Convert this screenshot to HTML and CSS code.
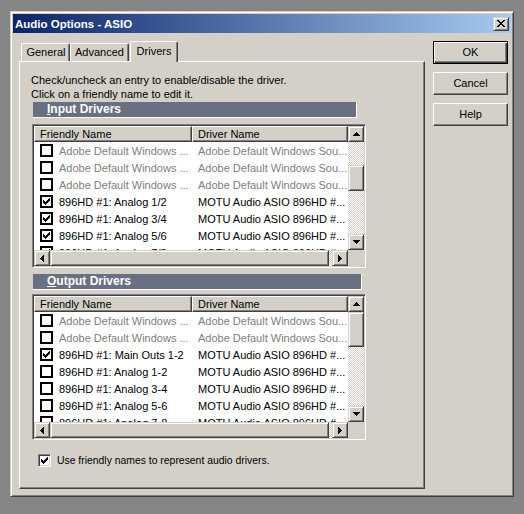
FILE: index.html
```html
<!DOCTYPE html>
<html>
<head>
<meta charset="utf-8">
<link rel="stylesheet" href="styles.css">
</head>
<body>
<div class="dialog">
  <div class="titlebar">
    <span class="title">Audio Options - ASIO</span>
    <div class="close raised">
      <svg width="8" height="7" viewBox="0 0 8 7" shape-rendering="crispEdges"><path d="M0 0h2v1h-2zM6 0h2v1h-2zM1 1h2v1h-2zM5 1h2v1h-2zM2 2h4v1h-4zM3 3h2v1h-2zM2 4h4v1h-4zM1 5h2v1h-2zM5 5h2v1h-2zM0 6h2v1h-2zM6 6h2v1h-2z"/></svg>
    </div>
  </div>
  <div class="main">
    <div class="leftcol">
      <div class="tabs">
        <div class="tab t-general">General</div>
        <div class="tab t-adv">Advanced</div>
        <div class="tab t-drv">Drivers</div>
      </div>
      <div class="panel">
        <p class="help">Check/uncheck an entry to enable/disable the driver.<br>Click on a friendly name to edit it.</p>

        <div class="groupbar gb-in"><u>I</u>nput Drivers</div>
        <div class="listbox lb-in">
          <div class="lv">
            <div class="lvhead"><div class="hc c1">Friendly Name</div><div class="hc c2">Driver Name</div></div>
            <div class="row dis"><div class="c1"><span class="cb"></span>Adobe Default Windows ...</div><div class="c2">Adobe Default Windows Sou...</div></div>
            <div class="row dis"><div class="c1"><span class="cb"></span>Adobe Default Windows ...</div><div class="c2">Adobe Default Windows Sou...</div></div>
            <div class="row dis"><div class="c1"><span class="cb"></span>Adobe Default Windows ...</div><div class="c2">Adobe Default Windows Sou...</div></div>
            <div class="row"><div class="c1"><span class="cb"><svg class="chk" width="7" height="7" viewBox="0 0 7 7" shape-rendering="crispEdges"><path d="M6 0h1v1h-1zM5 1h2v1h-2zM0 2h1v1h-1zM4 2h3v1h-3zM0 3h2v1h-2zM3 3h3v1h-3zM0 4h5v1h-5zM1 5h3v1h-3zM2 6h1v1h-1z"/></svg></span>896HD #1: Analog 1/2</div><div class="c2">MOTU Audio ASIO 896HD #...</div></div>
            <div class="row"><div class="c1"><span class="cb"><svg class="chk" width="7" height="7" viewBox="0 0 7 7" shape-rendering="crispEdges"><path d="M6 0h1v1h-1zM5 1h2v1h-2zM0 2h1v1h-1zM4 2h3v1h-3zM0 3h2v1h-2zM3 3h3v1h-3zM0 4h5v1h-5zM1 5h3v1h-3zM2 6h1v1h-1z"/></svg></span>896HD #1: Analog 3/4</div><div class="c2">MOTU Audio ASIO 896HD #...</div></div>
            <div class="row"><div class="c1"><span class="cb"><svg class="chk" width="7" height="7" viewBox="0 0 7 7" shape-rendering="crispEdges"><path d="M6 0h1v1h-1zM5 1h2v1h-2zM0 2h1v1h-1zM4 2h3v1h-3zM0 3h2v1h-2zM3 3h3v1h-3zM0 4h5v1h-5zM1 5h3v1h-3zM2 6h1v1h-1z"/></svg></span>896HD #1: Analog 5/6</div><div class="c2">MOTU Audio ASIO 896HD #...</div></div>
            <div class="row"><div class="c1"><span class="cb"><svg class="chk" width="7" height="7" viewBox="0 0 7 7" shape-rendering="crispEdges"><path d="M6 0h1v1h-1zM5 1h2v1h-2zM0 2h1v1h-1zM4 2h3v1h-3zM0 3h2v1h-2zM3 3h3v1h-3zM0 4h5v1h-5zM1 5h3v1h-3zM2 6h1v1h-1z"/></svg></span>896HD #1: Analog 7/8</div><div class="c2">MOTU Audio ASIO 896HD #...</div></div>
          </div>
          <div class="vscroll">
            <div class="sbtn raised"><svg width="7" height="4" viewBox="0 0 7 4" shape-rendering="crispEdges"><path d="M3 0h1v1h-1zM2 1h3v1h-3zM1 2h5v1h-5zM0 3h7v1h-7z"/></svg></div>
            <div class="vtrack"><div class="vthumb raised th-in"></div></div>
            <div class="sbtn raised"><svg width="7" height="4" viewBox="0 0 7 4" shape-rendering="crispEdges"><path d="M0 0h7v1h-7zM1 1h5v1h-5zM2 2h3v1h-3zM3 3h1v1h-1z"/></svg></div>
          </div>
          <div class="hscroll">
            <div class="sbtn raised"><svg width="4" height="7" viewBox="0 0 4 7" shape-rendering="crispEdges"><path d="M0 3h1v1h-1zM1 2h1v3h-1zM2 1h1v5h-1zM3 0h1v7h-1z"/></svg></div>
            <div class="htrack"><div class="hthumb raised"></div></div>
            <div class="sbtn raised"><svg width="4" height="7" viewBox="0 0 4 7" shape-rendering="crispEdges"><path d="M0 0h1v7h-1zM1 1h1v5h-1zM2 2h1v3h-1zM3 3h1v1h-1z"/></svg></div>
          </div>
          <div class="corner"></div>
        </div>

        <div class="groupbar gb-out"><u>O</u>utput Drivers</div>
        <div class="listbox lb-out">
          <div class="lv">
            <div class="lvhead"><div class="hc c1">Friendly Name</div><div class="hc c2">Driver Name</div></div>
            <div class="row dis"><div class="c1"><span class="cb"></span>Adobe Default Windows ...</div><div class="c2">Adobe Default Windows Sou...</div></div>
            <div class="row dis"><div class="c1"><span class="cb"></span>Adobe Default Windows ...</div><div class="c2">Adobe Default Windows Sou...</div></div>
            <div class="row"><div class="c1"><span class="cb"><svg class="chk" width="7" height="7" viewBox="0 0 7 7" shape-rendering="crispEdges"><path d="M6 0h1v1h-1zM5 1h2v1h-2zM0 2h1v1h-1zM4 2h3v1h-3zM0 3h2v1h-2zM3 3h3v1h-3zM0 4h5v1h-5zM1 5h3v1h-3zM2 6h1v1h-1z"/></svg></span>896HD #1: Main Outs 1-2</div><div class="c2">MOTU Audio ASIO 896HD #...</div></div>
            <div class="row"><div class="c1"><span class="cb"></span>896HD #1: Analog 1-2</div><div class="c2">MOTU Audio ASIO 896HD #...</div></div>
            <div class="row"><div class="c1"><span class="cb"></span>896HD #1: Analog 3-4</div><div class="c2">MOTU Audio ASIO 896HD #...</div></div>
            <div class="row"><div class="c1"><span class="cb"></span>896HD #1: Analog 5-6</div><div class="c2">MOTU Audio ASIO 896HD #...</div></div>
            <div class="row"><div class="c1"><span class="cb"></span>896HD #1: Analog 7-8</div><div class="c2">MOTU Audio ASIO 896HD #...</div></div>
          </div>
          <div class="vscroll">
            <div class="sbtn raised"><svg width="7" height="4" viewBox="0 0 7 4" shape-rendering="crispEdges"><path d="M3 0h1v1h-1zM2 1h3v1h-3zM1 2h5v1h-5zM0 3h7v1h-7z"/></svg></div>
            <div class="vtrack"><div class="vthumb raised th-out"></div></div>
            <div class="sbtn raised"><svg width="7" height="4" viewBox="0 0 7 4" shape-rendering="crispEdges"><path d="M0 0h7v1h-7zM1 1h5v1h-5zM2 2h3v1h-3zM3 3h1v1h-1z"/></svg></div>
          </div>
          <div class="hscroll">
            <div class="sbtn raised"><svg width="4" height="7" viewBox="0 0 4 7" shape-rendering="crispEdges"><path d="M0 3h1v1h-1zM1 2h1v3h-1zM2 1h1v5h-1zM3 0h1v7h-1z"/></svg></div>
            <div class="htrack"><div class="hthumb raised"></div></div>
            <div class="sbtn raised"><svg width="4" height="7" viewBox="0 0 4 7" shape-rendering="crispEdges"><path d="M0 0h1v7h-1zM1 1h1v5h-1zM2 2h1v3h-1zM3 3h1v1h-1z"/></svg></div>
          </div>
          <div class="corner"></div>
        </div>

        <div class="usefriendly">
          <span class="cb3d"><svg width="7" height="7" viewBox="0 0 7 7" shape-rendering="crispEdges"><path d="M6 0h1v1h-1zM5 1h2v1h-2zM0 2h1v1h-1zM4 2h3v1h-3zM0 3h2v1h-2zM3 3h3v1h-3zM0 4h5v1h-5zM1 5h3v1h-3zM2 6h1v1h-1z"/></svg></span>
          <span class="uflabel">Use friendly names to represent audio drivers.</span>
        </div>
      </div>
    </div>
    <div class="buttons">
      <div class="btn default">OK</div>
      <div class="btn">Cancel</div>
      <div class="btn">Help</div>
    </div>
  </div>
</div>
</body>
</html>
```

FILE: styles.css
```css
* { box-sizing: border-box; }
html, body { margin: 0; padding: 0; }
body {
  background: #858585;
  width: 524px;
  height: 514px;
  overflow: hidden;
  padding: 11px 0 0 10px;
  font-family: "Liberation Sans", Arial, sans-serif;
  font-size: 11px;
  color: #000;
}
.dialog {
  width: 504px;
  height: 486px;
  background: #d4d0c8;
  border: 1px solid;
  border-color: #d4d0c8 #404040 #404040 #d4d0c8;
  box-shadow: inset 1px 1px #fff, inset -1px -1px #808080;
  padding: 2px;
}
.titlebar {
  height: 19px;
  background: linear-gradient(to right, #0a246a, #a6caf0);
  display: flex;
  align-items: center;
  justify-content: space-between;
  padding: 0 2px 0 2px;
}
.title {
  color: #fff;
  font-weight: bold;
  font-size: 11.5px;
}
.raised {
  background: #d4d0c8;
  border: 1px solid;
  border-color: #d4d0c8 #404040 #404040 #d4d0c8;
  box-shadow: inset 1px 1px #fff, inset -1px -1px #808080;
}
.close {
  width: 16px;
  height: 14px;
  display: flex;
  align-items: center;
  justify-content: center;
}
.close svg { margin-left: -1px; margin-top: -1px; }
.main {
  display: flex;
  padding: 8px 0 0 6px;
}
.leftcol { width: 406px; }
.tabs {
  display: flex;
  align-items: flex-end;
  height: 20px;
  padding-left: 2px;
}
.tab {
  height: 18px;
  border-top: 1px solid #fff;
  border-left: 1px solid #fff;
  border-right: 1px solid #404040;
  box-shadow: inset -1px 0 #808080;
  border-top-left-radius: 2px;
  border-top-right-radius: 2px;
  text-align: center;
  line-height: 17px;
  background: #d4d0c8;
}
.t-general { width: 49px; padding-left: 1px; }
.t-adv { width: 59px; }
.t-drv {
  width: 48px;
  margin-left: 1px;
  height: 21px;
  margin-bottom: -1px;
  position: relative;
  z-index: 1;
  line-height: 18px;
}
.panel {
  height: 428px;
  border: 1px solid;
  border-color: #fff #404040 #404040 #fff;
  box-shadow: inset -1px -1px #808080;
  padding: 10px 0 0 11px;
}
.help {
  margin: 0;
  line-height: 14px;
  padding-top: 1px;
}
.groupbar {
  height: 16px;
  background: #6a7083;
  color: #fff;
  font-weight: bold;
  font-size: 12px;
  padding-left: 14px;
  margin-left: 2px;
  border-right: 1px solid #fff;
  border-bottom: 1px solid #fff;
  line-height: 15px;
}
.gb-in { width: 324px; margin-top: 1px; }
.gb-out { width: 329px; margin-top: 6px; }
.listbox {
  width: 334px;
  margin-left: 1px;
  border: 1px solid;
  border-color: #808080 #fff #fff #808080;
  box-shadow: inset 1px 1px #404040, inset -1px -1px #d4d0c8;
  padding: 1px;
  display: grid;
  grid-template-columns: 1fr 16px;
  grid-template-rows: 1fr 16px;
}
.lb-in { height: 144px; margin-top: 6px; }
.lb-out { height: 146px; margin-top: 4px; }
.lv {
  background: #fff;
  overflow: hidden;
}
.lvhead { display: flex; }
.hc {
  height: 16px;
  background: #d4d0c8;
  border: 1px solid;
  border-color: #fff #404040 #404040 #fff;
  box-shadow: inset -1px -1px #808080;
  padding-left: 5px;
  line-height: 14px;
  white-space: nowrap;
}
.c1 { width: 158px; flex: none; }
.c2 { width: 156px; flex: none; }
.row {
  display: flex;
  height: 17px;
  align-items: center;
  white-space: nowrap;
}
.row .c1 {
  display: flex;
  align-items: center;
  padding-left: 6px;
  overflow: hidden;
}
.row .c2 {
  padding-left: 6px;
  overflow: hidden;
}
.row.dis { color: #808080; }
.cb {
  width: 13px;
  height: 13px;
  flex: none;
  border: 2px solid #000;
  background: #fff;
  margin-right: 6px;
  display: flex;
  align-items: center;
  justify-content: center;
}
.cb svg path, .cb3d svg path { fill: #000; }
.vscroll {
  display: flex;
  flex-direction: column;
}
.sbtn {
  width: 16px;
  height: 16px;
  flex: none;
  display: flex;
  align-items: center;
  justify-content: center;
}
.vtrack, .htrack {
  flex: 1;
  background: repeating-conic-gradient(#d4d0c8 0 25%, #fff 0 50%) 0 0 / 2px 2px;
  display: flex;
}
.vtrack { flex-direction: column; }
.vthumb { width: 16px; flex: none; }
.th-in { margin-top: 23px; height: 26px; }
.th-out { margin-top: 0; height: 35px; }
.hscroll { display: flex; }
.hthumb { width: 279px; height: 16px; flex: none; }
.corner { background: #d4d0c8; }
.usefriendly {
  display: flex;
  align-items: center;
  height: 13px;
  margin-top: 14px;
  margin-left: 7px;
}
.uflabel { font-size: 10.4px; }
.cb3d {
  width: 13px;
  height: 13px;
  flex: none;
  background: #fff;
  border: 1px solid;
  border-color: #808080 #fff #fff #808080;
  box-shadow: inset 1px 1px #404040, inset -1px -1px #d4d0c8;
  display: flex;
  align-items: center;
  justify-content: center;
  margin-right: 6px;
}
.buttons {
  display: flex;
  flex-direction: column;
  gap: 8px;
  margin-left: 8px;
}
.btn {
  width: 75px;
  height: 23px;
  border: 1px solid;
  border-color: #fff #404040 #404040 #fff;
  box-shadow: inset -1px -1px #808080;
  text-align: center;
  line-height: 21px;
  background: #d4d0c8;
}
.btn.default {
  border: 1px solid #000;
  box-shadow: inset 1px 1px #fff, inset -1px -1px #404040, inset -2px -2px #808080;
}
```
